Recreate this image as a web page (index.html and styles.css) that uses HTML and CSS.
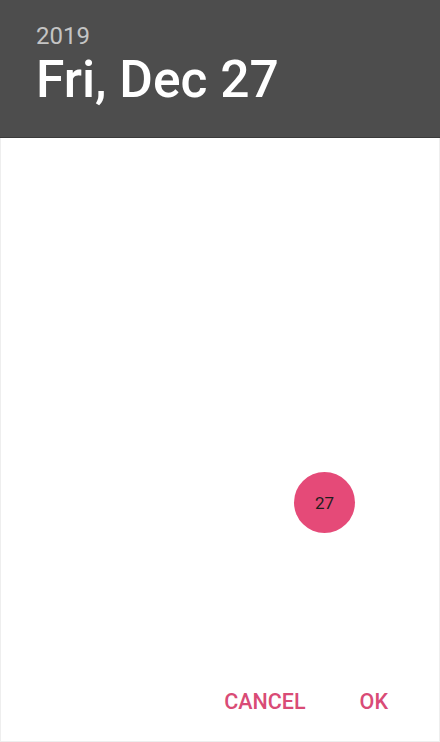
FILE: index.html
```html
<!DOCTYPE html>
<html>
<head>
<meta charset="utf-8">
<link rel="stylesheet" href="styles.css">
</head>
<body>
<div class="dialog">
  <header class="header">
    <div class="year">2019</div>
    <div class="date">Fri, Dec 27</div>
  </header>
  <main class="body">
    <div class="day-row">
      <span class="day selected">27</span>
    </div>
  </main>
  <footer class="actions">
    <button class="btn">CANCEL</button>
    <button class="btn">OK</button>
  </footer>
</div>
</body>
</html>
```
FILE: styles.css
```css
html, body {
  margin: 0;
  padding: 0;
  background: #ffffff;
}
body {
  font-family: Roboto, "Noto Sans", sans-serif;
}
.dialog {
  width: 440px;
  height: 742px;
  box-sizing: border-box;
  display: flex;
  flex-direction: column;
  border: 1px solid #eeeeee;
  border-top: none;
}
.header {
  height: 138px;
  box-sizing: border-box;
  margin: 0 -1px;
  background: #4d4d4d;
  border-bottom: 1px solid #3a3a3a;
  padding: 20px 0 0 36px;
}
.year {
  color: #c4c4c4;
  font-size: 24px;
  line-height: 32px;
}
.date {
  color: #ffffff;
  font-size: 51.5px;
  font-weight: 500;
  line-height: 58px;
  margin-top: -1px;
}
.body {
  flex: 1;
  display: flex;
  flex-direction: column;
  justify-content: flex-end;
  padding-bottom: 148px;
}
.day-row {
  display: flex;
  justify-content: flex-end;
  padding-right: 84px;
}
.day {
  width: 61px;
  height: 61px;
  border-radius: 50%;
  display: flex;
  align-items: center;
  justify-content: center;
  font-size: 17px;
  color: #1e1e1e;
}
.selected {
  background: #e54a78;
}
.actions {
  height: 60px;
  box-sizing: border-box;
  display: flex;
  justify-content: flex-end;
  align-items: flex-start;
  padding: 10px 24px 0 0;
}
.btn {
  background: none;
  border: none;
  font-family: Roboto, "Noto Sans", sans-serif;
  font-weight: 500;
  font-size: 21.5px;
  color: #d94b76;
  padding: 0 27px;
  line-height: 22px;
  margin: 0;
}
```
